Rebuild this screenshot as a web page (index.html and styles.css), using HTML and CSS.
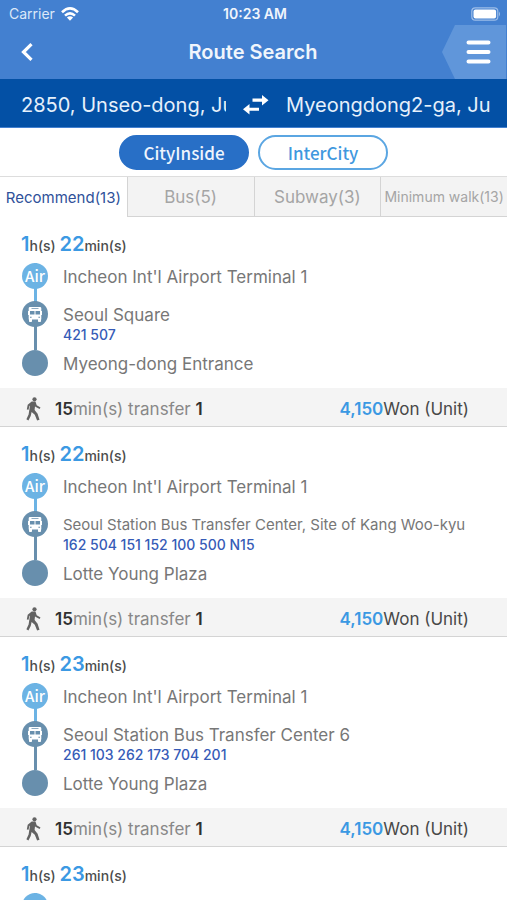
FILE: index.html
```
<!DOCTYPE html>
<html lang="en">
<head>
<meta charset="utf-8">
<meta name="viewport" content="width=device-width, initial-scale=1">
<title>Route Search</title>
<link rel="stylesheet" href="styles.css">
</head>
<body>
<svg class="defs" aria-hidden="true">
  <symbol id="bus" viewBox="0 0 14 15">
    <path fill="#fff" d="M2 0h10q1.300 0 1.300 1.300V12.500H.7V1.300Q.7 0 2 0zM0 4h1v4H0zM13 4h1v4h-1zM1 12h3v2.200q0 .8-.8.8H1.800q-.8 0-.8-.8zM10 12h3v2.200q0 .8-.8.8h-1.400q-.8 0-.8-.8z"/>
    <path fill="#688fad" d="M3.500 1.200h7v.9h-7zM2 4h4.500v3.500H2zM7.500 4H12v3.500H7.500zM2 9.800h1.600v1H2zM10.400 9.800H12v1h-1.600z"/>
  </symbol>
  <symbol id="walk" viewBox="0 0 14 24">
    <circle cx="8" cy="2.300" r="2.100"/>
    <path d="M5.200 4.600h3.800l1.200 3.600 3.800 2.200-.9 1.500-4.200-2.100-.4-.6-.4 3.900 3 3.600 1.900 6-2.400.8-2.300-5.800-3.200-2.800-.9 4L1.900 23.600-.1 22.300l2.200-4.700L3.500 8.600l-.7.6-.7 3.500-1.800-.3.900-4.600z"/>
  </symbol>
</svg>

<header class="header">
  <div class="status">
    <span class="status-left">Carrier
      <svg class="wifi" viewBox="0 0 18 14" fill="none" stroke="#fff" stroke-width="2.600"><path d="M1 5.200Q9-2.400 17 5.200M4 8.600q5-4.600 10 0"/><path fill="#fff" stroke="none" d="M9 13.700 5.900 10.600q3.100-2.600 6.200 0z"/></svg>
    </span>
    <span class="clock">10:23 AM</span>
    <svg class="battery" viewBox="0 0 30 14"><rect x=".8" y=".8" width="26" height="12.400" rx="3.500" fill="none" stroke="#9dbde8" stroke-width="1.200"/><rect x="2.500" y="2.500" width="22.600" height="9" rx="2" fill="#fff"/><path fill="#9dbde8" d="M28 4.500q2 2.500 0 5z"/></svg>
  </div>
  <div class="nav">
    <button class="back" type="button" aria-label="Back"><svg viewBox="0 0 12 18" fill="none" stroke="#fff" stroke-width="3.200"><path d="M10.500 1.200 2.500 9l8 7.800"/></svg></button>
    <h1 class="title">Route Search</h1>
    <button class="menu" type="button" aria-label="Menu"><svg viewBox="0 0 24 24" stroke="#fff" stroke-width="4" stroke-linecap="round"><path d="M2 2.500h20M2 12h20M2 21.500h20"/></svg></button>
  </div>
</header>

<div class="route">
  <span class="place">2850, Unseo-dong, Ju</span>
  <button class="swap" type="button" aria-label="Swap"><svg viewBox="0 0 26 20" fill="#fff"><path d="M9.500 3.500H19V0l6.500 5.200-6.500 5.200V6.800H9.500zM16 12.800v3H6.500v3.700L0 14.300 6.500 9v3.800z"/></svg></button>
  <span class="place">Myeongdong2-ga, Ju</span>
</div>

<div class="modes">
  <button class="mode mode-on" type="button">CityInside</button>
  <button class="mode" type="button">InterCity</button>
</div>

<nav class="tabs">
  <button class="tab tab-on" type="button">Recommend(13)</button>
  <button class="tab" type="button">Bus(5)</button>
  <button class="tab" type="button">Subway(3)</button>
  <button class="tab tab-small" type="button">Minimum walk(13)</button>
</nav>

<main class="results">
  <article class="card">
    <h2 class="time"><b>1</b>h(s) <b>22</b>min(s)</h2>
    <ol class="stops">
      <li class="stop stop-air"><span class="dot">Air</span><p class="name">Incheon Int'l Airport Terminal 1</p></li>
      <li class="stop stop-bus"><span class="dot"><svg class="bus"><use href="#bus"/></svg></span><div><p class="name">Seoul Square</p><p class="lines">421 507</p></div></li>
      <li class="stop"><span class="dot"></span><p class="name">Myeong-dong Entrance</p></li>
    </ol>
    <footer class="sum"><svg class="walk"><use href="#walk"/></svg><p class="walk-text"><b>15</b>min(s) transfer <b>1</b></p><p class="fare"><b>4,150</b>Won (Unit)</p></footer>
  </article>
  <article class="card">
    <h2 class="time"><b>1</b>h(s) <b>22</b>min(s)</h2>
    <ol class="stops">
      <li class="stop stop-air"><span class="dot">Air</span><p class="name">Incheon Int'l Airport Terminal 1</p></li>
      <li class="stop stop-bus"><span class="dot"><svg class="bus"><use href="#bus"/></svg></span><div><p class="name name-long">Seoul Station Bus Transfer Center, Site of Kang Woo-kyu</p><p class="lines">162 504 151 152 100 500 N15</p></div></li>
      <li class="stop"><span class="dot"></span><p class="name">Lotte Young Plaza</p></li>
    </ol>
    <footer class="sum"><svg class="walk"><use href="#walk"/></svg><p class="walk-text"><b>15</b>min(s) transfer <b>1</b></p><p class="fare"><b>4,150</b>Won (Unit)</p></footer>
  </article>
  <article class="card">
    <h2 class="time"><b>1</b>h(s) <b>23</b>min(s)</h2>
    <ol class="stops">
      <li class="stop stop-air"><span class="dot">Air</span><p class="name">Incheon Int'l Airport Terminal 1</p></li>
      <li class="stop stop-bus"><span class="dot"><svg class="bus"><use href="#bus"/></svg></span><div><p class="name">Seoul Station Bus Transfer Center 6</p><p class="lines">261 103 262 173 704 201</p></div></li>
      <li class="stop"><span class="dot"></span><p class="name">Lotte Young Plaza</p></li>
    </ol>
    <footer class="sum"><svg class="walk"><use href="#walk"/></svg><p class="walk-text"><b>15</b>min(s) transfer <b>1</b></p><p class="fare"><b>4,150</b>Won (Unit)</p></footer>
  </article>
  <article class="card">
    <h2 class="time"><b>1</b>h(s) <b>23</b>min(s)</h2>
    <ol class="stops">
      <li class="stop stop-air"><span class="dot"></span></li>
    </ol>
  </article>
</main>
</body>
</html>
```
FILE: styles.css
```
* { box-sizing: border-box; }
html, body { height: 100%; }
body {
  margin: 0;
  display: flex;
  flex-direction: column;
  overflow: hidden;
  background: #fff;
  color: #777;
  font-family: Inter, "Liberation Sans", sans-serif;
}
h1, h2, p, ol { margin: 0; padding: 0; }
ol { list-style: none; }
button { border: 0; padding: 0; background: none; font: inherit; color: inherit; white-space: nowrap; }
svg { display: block; }
.defs { display: none; }
.header, .route, .modes, .tabs { flex: none; }

.header { background: #4380d0; color: #fff; }
.status {
  display: grid;
  grid-template-columns: 1fr auto 1fr;
  align-items: center;
  height: 25px;
  padding: 2px 6px 0 9px;
  font-size: 14px;
}
.status-left { display: flex; align-items: center; gap: 6px; color: #dce8f8; }
.wifi { width: 18px; height: 14px; }
.clock { font-weight: 600; color: #f0f5fc; }
.battery { width: 30px; height: 14px; justify-self: end; }
.nav {
  display: grid;
  grid-template-columns: 64px 1fr 64px;
  align-items: center;
  height: 54px;
  padding-right: 1px;
}
.back { padding-left: 21px; }
.back svg { width: 12px; height: 18px; }
.title { font-size: 20px; font-weight: 600; text-align: center; color: #f0f5fc; }
.menu {
  height: 54px;
  padding-left: 24px;
  background: #6096da;
  clip-path: polygon(0 50%, 13px 0, 100% 0, 100% 100%, 13px 100%);
}
.menu svg { width: 25px; height: 24px; }

.route {
  display: grid;
  grid-template-columns: 1fr 26px 1fr;
  align-items: center;
  gap: 17px;
  height: 49px;
  padding: 3px 16px 0 21px;
  border-bottom: 1px solid #4380d0;
  background: #0350a5;
  color: #e6f0fb;
  font-size: 20px;
}
.place { overflow: hidden; white-space: nowrap; }
.swap svg { width: 26px; height: 20px; }

.modes { display: flex; justify-content: center; gap: 9px; height: 48px; padding-top: 7px; }
.mode {
  width: 130px;
  height: 35px;
  border: 2px solid #5ba6e2;
  border-radius: 18px;
  color: #3f98de;
  font-family: "Noto Sans CJK KR", sans-serif;
  font-size: 17px;
  font-weight: 500;
  line-height: 31px;
}
.mode-on { border-color: #286fc6; background: #286fc6; color: #eef5fd; }

.tabs { display: grid; grid-template-columns: repeat(4, 1fr); height: 41px; border-top: 1px solid #ddd; }
.tab {
  min-width: 0;
  border-left: 1px solid #d4d4d4;
  border-bottom: 1px solid #d4d4d4;
  background: #f3f3f3;
  color: #a5a5a5;
  font-size: 17px;
}
.tab-on { border: 0; background: #fff; color: #2f519a; font-size: 15px; }
.tab-small { font-size: 14px; }

.results { flex: 1; min-height: 0; overflow: hidden; }
.time {
  height: 39px;
  padding: 15px 21px 0;
  margin-bottom: 7px;
  color: #4c4c4c;
  font-size: 14px;
  font-weight: 500;
  line-height: 24px;
}
.time b { color: #3b99e3; font-size: 20px; font-weight: 600; }
.stops { padding: 0 22px 10px; }
.stop { display: flex; gap: 15px; --dot: #688fad; background: linear-gradient(var(--dot), var(--dot)) 12px 0 / 0 100% no-repeat; }
.stop-air { --dot: #6cb3e4; min-height: 38px; background-size: 3px 100%; }
.stop-bus { min-height: 49px; background-size: 3px 100%; }
.dot {
  flex: none;
  display: grid;
  place-items: center;
  width: 26px;
  height: 26px;
  border-radius: 50%;
  background: var(--dot);
  color: #fff;
  font: 500 15px "Noto Sans CJK KR", sans-serif;
  line-height: 26px;
}
.bus { width: 14px; height: 15px; }
.name { color: #777; font-size: 17px; line-height: 28px; white-space: nowrap; }
.name-long { font-size: 15px; }
.lines { color: #365bb7; font-size: 14px; font-weight: 500; line-height: 12px; }
.sum {
  display: flex;
  align-items: center;
  height: 39px;
  padding: 4px 38px 0 26px;
  border-bottom: 1px solid #d4d4d4;
  background: #f4f4f4;
  color: #888;
  font-size: 17px;
}
.walk { width: 15px; height: 24px; fill: #636363; }
.walk-text { margin-left: 14px; }
.sum b { color: #303030; font-weight: 600; }
.fare { margin-left: auto; color: #484848; }
.sum .fare b { color: #3b99e3; }
```
